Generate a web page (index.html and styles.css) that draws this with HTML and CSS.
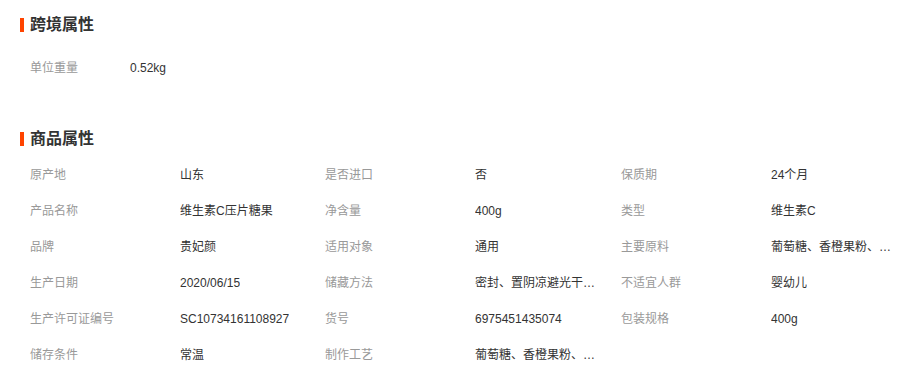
FILE: index.html
```html
<!DOCTYPE html>
<html lang="zh-CN">
<head>
<meta charset="utf-8">
<link rel="stylesheet" href="styles.css">
</head>
<body>
<div class="page">
  <section class="section section-cross">
    <h2 class="title">跨境属性</h2>
    <div class="single-row">
      <span class="label label-short">单位重量</span>
      <span class="value">0.52kg</span>
    </div>
  </section>
  <section class="section section-goods">
    <h2 class="title">商品属性</h2>
    <div class="grid">
      <div class="cell"><span class="label">原产地</span><span class="value">山东</span></div>
      <div class="cell"><span class="label">是否进口</span><span class="value">否</span></div>
      <div class="cell"><span class="label">保质期</span><span class="value">24个月</span></div>
      <div class="cell"><span class="label">产品名称</span><span class="value">维生素C压片糖果</span></div>
      <div class="cell"><span class="label">净含量</span><span class="value">400g</span></div>
      <div class="cell"><span class="label">类型</span><span class="value">维生素C</span></div>
      <div class="cell"><span class="label">品牌</span><span class="value">贵妃颜</span></div>
      <div class="cell"><span class="label">适用对象</span><span class="value">通用</span></div>
      <div class="cell"><span class="label">主要原料</span><span class="value">葡萄糖、香橙果粉、维生素C</span></div>
      <div class="cell"><span class="label">生产日期</span><span class="value">2020/06/15</span></div>
      <div class="cell"><span class="label">储藏方法</span><span class="value">密封、置阴凉避光干燥处</span></div>
      <div class="cell"><span class="label">不适宜人群</span><span class="value">婴幼儿</span></div>
      <div class="cell"><span class="label">生产许可证编号</span><span class="value">SC10734161108927</span></div>
      <div class="cell"><span class="label">货号</span><span class="value">6975451435074</span></div>
      <div class="cell"><span class="label">包装规格</span><span class="value">400g</span></div>
      <div class="cell"><span class="label">储存条件</span><span class="value">常温</span></div>
      <div class="cell"><span class="label">制作工艺</span><span class="value">葡萄糖、香橙果粉、维生素C</span></div>
    </div>
  </section>
</div>
</body>
</html>
```
FILE: styles.css
```css
html, body {
  margin: 0;
  padding: 0;
  background: #fff;
}
body {
  font-family: "Liberation Sans", "Noto Sans CJK SC", sans-serif;
  font-size: 12px;
  color: #333;
}
.page {
  padding: 15px 0 0 20px;
}
.title {
  margin: 0;
  height: 20px;
  line-height: 20px;
  font-size: 16px;
  font-weight: bold;
  color: #333;
  display: flex;
  align-items: center;
}
.title::before {
  content: "";
  width: 4px;
  height: 14px;
  background: #ff4400;
  margin-right: 6px;
}
.single-row {
  margin-top: 15px;
  height: 36px;
  line-height: 36px;
  padding-left: 10px;
  display: flex;
}
.label {
  color: #999;
  width: 150px;
  flex: none;
  white-space: nowrap;
}
.label-short {
  width: 100px;
}
.value {
  color: #333;
  white-space: nowrap;
}
.section-goods {
  margin-top: 43px;
}
.grid {
  margin-top: 8px;
  padding-left: 10px;
  display: grid;
  grid-template-columns: 295px 296px 296px;
}
.cell {
  height: 36px;
  line-height: 36px;
  display: flex;
  min-width: 0;
}
.cell .value {
  max-width: 121px;
  overflow: hidden;
  text-overflow: ellipsis;
}
```
